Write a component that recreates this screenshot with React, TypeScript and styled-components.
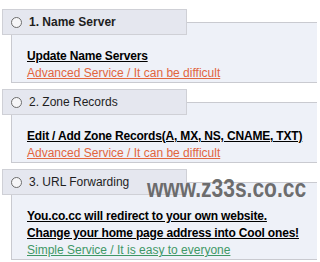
import styled, { createGlobalStyle } from "styled-components"

const GlobalStyle = createGlobalStyle`
	body {
		margin: 0;
		background: #ffffff;
		font-family: "Liberation Sans", Arial, sans-serif;
		font-size: 12px;
		overflow: hidden;
	}
`

const StyledPage = styled.div`
	position: relative;
	width: 317px;
	height: 262px;
	padding: 9px 0 0 2px;
	box-sizing: border-box;
	display: flex;
	flex-direction: column;
	gap: 6px;
	overflow: hidden;
`

const StyledSection = styled.div`
	display: flex;
	flex-direction: column;
`

const StyledTab = styled.div<{ $active?: boolean }>`
	position: relative;
	z-index: 1;
	display: flex;
	align-items: center;
	gap: 7px;
	box-sizing: border-box;
	width: 185px;
	height: 26px;
	padding-left: 8px;
	background: #e5e7ef;
	border: 1px solid #cfd0d6;
	color: #1e1e1e;
	font-weight: ${(p) => (p.$active ? "bold" : "normal")};
	font-size: 12px;
`

const StyledRadio = styled.span`
	width: 11px;
	height: 11px;
	box-sizing: border-box;
	border-radius: 50%;
	border: 1px solid #6d6d6d;
	background: #f6f6f8;
	flex-shrink: 0;
`

const StyledPanel = styled.div`
	margin: -13px 0 0 9px;
	padding: 25px 0 0 15px;
	background: #eef1f8;
	border-top: 1px solid #c9cad0;
	border-left: 1px solid #c9cad0;
	border-bottom: 1px solid #c9cad0;
`

const StyledLine = styled.a<{ $tone: "main" | "hard" | "easy" }>`
	display: block;
	line-height: 17px;
	font-size: 12px;
	text-decoration: underline;
	white-space: nowrap;
	font-weight: ${(p) => (p.$tone === "main" ? "bold" : "normal")};
	letter-spacing: ${(p) => (p.$tone === "main" ? "-0.18px" : "0")};
	color: ${(p) =>
		p.$tone === "main" ? "#000000" : p.$tone === "hard" ? "#e2653e" : "#3e9866"};
`

const StyledWatermark = styled.div`
	position: absolute;
	left: 147px;
	top: 173px;
	z-index: 2;
	font-family: "Liberation Sans", Arial, sans-serif;
	font-weight: bold;
	font-size: 21px;
	color: rgba(96, 96, 96, 0.92);
	transform: scaleY(1.25);
	transform-origin: left top;
	white-space: nowrap;
`

type Line = { text: string; tone: "main" | "hard" | "easy" }

const SectionData: { title: string; active?: boolean; lines: Line[] }[] = [
	{
		title: "1. Name Server",
		active: true,
		lines: [
			{ text: "Update Name Servers", tone: "main" },
			{ text: "Advanced Service / It can be difficult", tone: "hard" },
		],
	},
	{
		title: "2. Zone Records",
		lines: [
			{ text: "Edit / Add Zone Records(A, MX, NS, CNAME, TXT)", tone: "main" },
			{ text: "Advanced Service / It can be difficult", tone: "hard" },
		],
	},
	{
		title: "3. URL Forwarding",
		lines: [
			{ text: "You.co.cc will redirect to your own website.", tone: "main" },
			{ text: "Change your home page address into Cool ones!", tone: "main" },
			{ text: "Simple Service / It is easy to everyone", tone: "easy" },
		],
	},
]

function App() {
	return (
		<StyledPage>
			<GlobalStyle />
			{SectionData.map((section, index) => {
				return (
					<StyledSection key={index}>
						<StyledTab $active={section.active}>
							<StyledRadio />
							{section.title}
						</StyledTab>
						<StyledPanel>
							{section.lines.map((line, i) => (
								<StyledLine key={i} $tone={line.tone} href="#">
									{line.text}
								</StyledLine>
							))}
						</StyledPanel>
					</StyledSection>
				)
			})}
			<StyledWatermark>www.z33s.co.cc</StyledWatermark>
		</StyledPage>
	)
}

export default App
